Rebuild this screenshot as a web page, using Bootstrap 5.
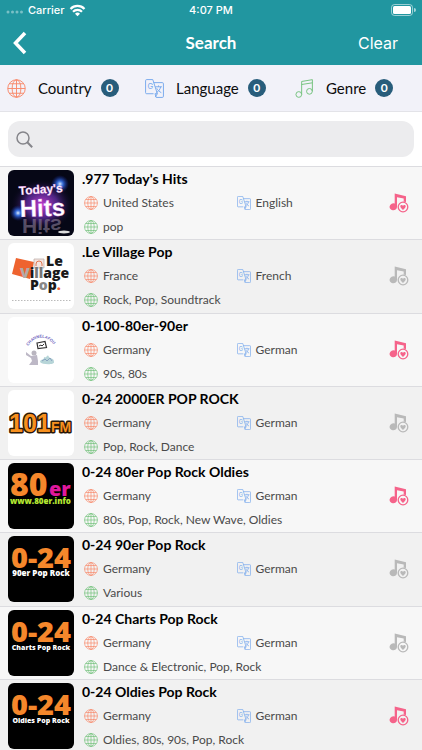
<!DOCTYPE html>
<html lang="en">
<head>
<meta charset="utf-8">
<meta name="viewport" content="width=device-width, initial-scale=1">
<title>Search</title>
<link href="https://cdn.jsdelivr.net/npm/bootstrap@5.3.0/dist/css/bootstrap.min.css" rel="stylesheet">
<style>
html { scrollbar-width: none; }
html::-webkit-scrollbar { display: none; }
body { font-family: Lato, "Liberation Sans", sans-serif; background: #fff; color: #0c0c0c; }
svg { display: block; flex: none; }
.app-head { background: #2196a0; color: #fff; }
.status { height: 20px; font: 500 11px/20px Inter, sans-serif; padding: 0 6px; }
.head-grid { display: grid; grid-template-columns: 1fr auto 1fr; align-items: center; }
.nav-line { height: 45px; padding: 0 24px 0 12px; }
.nav-line h1 { font-size: 17px; line-height: 24px; font-weight: 700; padding-left: 12px; }
.nav-line .btn { color: #fff; font: 400 16px/24px Inter, sans-serif; }
.filters { display: grid; grid-template-columns: 138fr 150fr 134fr; background: #f2f2f9; height: 47px; border-bottom: 1px solid #e3e3e8; }
.filters .btn { padding: 0 0 0 7px; border: 0; gap: 12px; font-size: 15px; line-height: 24px; color: #0c0c0c; }
.count { width: 18px; height: 18px; border-radius: 9px; background: #285d7b; color: #fff; font-size: 12px; line-height: 18px; font-weight: 700; margin-left: -3px; }
.search-box { padding: 9px 8px; }
.search-pill { height: 36px; border-radius: 12px; background: #ececee; padding: 0 8px; gap: 8px; }
.search-pill input { font-size: 16px; }
.stations { display: grid; grid-auto-rows: 1fr; min-height: 587px; border-top: 1px solid #dcdce0; }
.station { padding: 0 13px 0 8px; border-bottom: 1px solid #dcdce0; background: #f7f7f7; }
.station:nth-child(even) { background: #f1f1f1; }
.thumb { border-radius: 6px; }
.info { padding-left: 8px; }
.info h2 { font-size: 14px; line-height: 24px; font-weight: 700; color: #000; }
.meta { font-size: 12px; line-height: 24px; color: #4a4a4a; padding-left: 2px; }
.meta span { gap: 5px; }
.c-orange { color: #f8896c; }
.c-green { color: #72c17b; }
.c-blue { color: #76a8ec; }
.fav { color: #b9b9b9; }
.fav.on { color: #f5638a; }
.logo-today { font-family: "Liberation Sans", sans-serif; font-weight: 700; }
.logo-pop { font-family: "Open Sans", sans-serif; font-weight: 800; }
</style>
<script src="https://cdn.jsdelivr.net/npm/bootstrap@5.3.0/dist/js/bootstrap.bundle.min.js" defer></script>
</head>
<body>
<svg width="0" height="0" class="position-absolute" aria-hidden="true">
  <symbol id="globe" viewBox="0 0 20 20"><g fill="none" stroke="currentColor"><circle cx="10" cy="10" r="9.2"/><ellipse cx="10" cy="10" rx="4.6" ry="9.2"/><path d="M10 .8v18.4M.8 10h18.4M2.4 5h15.2M2.4 15h15.2"/></g></symbol>
  <symbol id="lang" viewBox="0 0 20 20"><g fill="none" stroke="currentColor"><path d="M9 15.500H1.800Q.6 15.500.6 14.300V1.800Q.6.600 1.800.600H8.200L13 15.500M9 3.800H18.200Q19.400 3.800 19.400 5V18.200Q19.400 19.400 18.200 19.400H11.800L10.500 15.500H13L10.800 19"/><path d="M10.800 8.200h7M14.200 6.800v1.400M16.500 8.200c-.6 3-2.300 4.800-4.500 6.200M12.400 9.800c1 2 2.700 3.600 4.800 4.600"/></g><text x="2.600" y="10.800" font-family="Inter, sans-serif" font-size="8" fill="currentColor">G</text></symbol>
  <symbol id="note" viewBox="0 0 20 20"><g fill="none" stroke="currentColor"><circle cx="4" cy="16.300" r="3"/><circle cx="15.200" cy="13" r="3"/><path d="M7 16.300V2.600L18.300.700V13M7 5.800L18.300 4"/></g></symbol>
  <symbol id="fav" viewBox="0 0 20 20"><path fill="currentColor" d="M5.700.600 17 3.200V9.100A6 6 0 0 0 14.700 8.900V5.600L8 4.200V14A3.700 3.500 0 1 1 5.700 10.600Z"/><circle cx="14" cy="14" r="4.800" fill="none" stroke="currentColor" stroke-width="1.300"/><path fill="currentColor" d="M14 16.900C12 15.300 11.300 14.300 11.300 13.300 11.300 11.900 13.100 11.400 14 12.700 14.900 11.400 16.700 11.900 16.700 13.300 16.700 14.300 16 15.300 14 16.900Z"/></symbol>
  <radialGradient id="glow"><stop offset="0" stop-color="#c23bd0"/><stop offset=".5" stop-color="#5a2a96" stop-opacity=".85"/><stop offset="1" stop-color="#060716" stop-opacity="0"/></radialGradient>
  <radialGradient id="spark"><stop offset="0" stop-color="#dff0ff"/><stop offset=".35" stop-color="#3a7cff" stop-opacity=".8"/><stop offset="1" stop-color="#1428a0" stop-opacity="0"/></radialGradient>
</svg>

<header class="app-head">
  <div class="status head-grid">
    <div class="d-flex align-items-center">
      <svg width="18" height="10" fill="#fff" fill-opacity=".4" aria-hidden="true"><circle cx="2" cy="7" r="1.500"/><circle cx="6.500" cy="7" r="1.500"/><circle cx="11" cy="7" r="1.500"/><circle cx="15.500" cy="7" r="1.500"/></svg>
      <span class="ms-1 me-1">Carrier</span>
      <svg width="17" height="13" viewBox="0 0 17 13" aria-hidden="true"><g fill="none" stroke="#fff" stroke-width="2.200"><path d="M1.500 4.900a9.800 9.800 0 0 1 14 0M4 7.700a6.300 6.300 0 0 1 9 0"/></g><path fill="#fff" d="M8.500 12.300 6 9.700a3.500 3.500 0 0 1 5 0Z"/></svg>
    </div>
    <span>4:07 PM</span>
    <svg class="ms-auto" width="25" height="12" viewBox="0 0 25 12" aria-label="Battery full"><rect x=".5" y=".5" width="21" height="11" rx="3" fill="none" stroke="#fff" stroke-opacity=".55"/><rect x="2" y="2" width="18" height="8" rx="1.500" fill="#fff"/><path d="M23 4a2 2 0 0 1 0 4Z" fill="#fff" fill-opacity=".6"/></svg>
  </div>
  <div class="nav-line head-grid">
    <button class="btn p-0 border-0 me-auto" type="button" aria-label="Back"><svg width="16" height="24" viewBox="0 0 16 24" fill="none" stroke="#fff" stroke-width="3.500"><path d="M13 2 3.500 12 13 22"/></svg></button>
    <h1 class="m-0">Search</h1>
    <button class="btn p-0 border-0 ms-auto" type="button">Clear</button>
  </div>
</header>

<nav class="filters" aria-label="Filters">
  <button class="btn d-flex align-items-center" type="button"><svg class="c-orange" width="19" height="19"><use href="#globe"/></svg>Country<span class="count">0</span></button>
  <button class="btn d-flex align-items-center" type="button"><svg class="c-blue" width="19" height="19"><use href="#lang"/></svg>Language<span class="count">0</span></button>
  <button class="btn d-flex align-items-center" type="button"><svg class="c-green" width="19" height="19"><use href="#note"/></svg>Genre<span class="count">0</span></button>
</nav>

<form class="search-box" role="search">
  <label class="search-pill d-flex align-items-center">
    <svg width="17" height="17" viewBox="0 0 17 17" fill="none" stroke="#85858a" stroke-width="1.500"><circle cx="7" cy="7" r="6"/><path d="M11.300 11.300 16.200 16.200" stroke-width="2"/></svg>
    <input class="form-control border-0 bg-transparent shadow-none p-0" type="search" aria-label="Search stations">
  </label>
</form>

<main class="stations">
  <article class="station d-flex align-items-center">
    <svg class="thumb" width="66" height="66" viewBox="0 0 66 66"><rect width="66" height="66" fill="#060716"/><ellipse cx="34" cy="35" rx="32" ry="26" fill="url(#glow)"/><circle cx="52" cy="14" r="9" fill="url(#spark)"/><circle cx="10" cy="43" r="8" fill="url(#spark)"/><g class="logo-today" fill="#fff" stroke="#eda0f0" stroke-width=".3"><text x="11" y="25" font-size="12" transform="rotate(-4 11 25)">Today's</text><text x="12" y="47" font-size="24" transform="rotate(-2 12 47)">Hits</text></g><g class="logo-today" fill="#8b7d96" opacity=".6"><text x="14" y="-49" font-size="21" transform="scale(1 -1)">Hits</text></g><ellipse cx="56" cy="62" rx="6" ry="1.500" fill="#ddd"/></svg>
    <div class="info flex-grow-1">
      <h2 class="m-0">.977 Today's Hits</h2>
      <div class="meta row g-0"><span class="col-6 d-flex align-items-center"><svg class="c-orange" width="14" height="14"><use href="#globe"/></svg>United States</span><span class="col-6 d-flex align-items-center"><svg class="c-blue" width="14" height="14"><use href="#lang"/></svg>English</span></div>
      <div class="meta"><span class="d-flex align-items-center"><svg class="c-green" width="14" height="14"><use href="#globe"/></svg>pop</span></div>
    </div>
    <button class="fav on btn p-0 border-0" type="button" aria-label="Remove favourite"><svg width="20" height="20"><use href="#fav"/></svg></button>
  </article>

  <article class="station d-flex align-items-center">
    <svg class="thumb" width="66" height="66" viewBox="0 0 66 66"><rect width="66" height="66" fill="#fff"/><path fill="#ee632f" d="M8 15 26 19 22 36 4 31Z"/><path d="M26 16h10v9H26Z" fill="#f4e4df" stroke="#b9a9a5" stroke-width=".7"/><path d="M28 23v-2a3 3 0 0 1 6 0v2" fill="none" stroke="#e07852"/><g class="logo-pop" font-size="14" fill="#191919"><text x="38" y="23">Le</text><text x="12" y="35"><tspan fill="#b3aaa7">V</tspan>i<tspan fill="#777">ll</tspan>age</text><text x="22" y="47">P<tspan fill="#888">o</tspan>p<tspan fill="#ee632f">.</tspan></text></g><path d="M4 57.500h59" stroke="#bbb" stroke-width="1" stroke-dasharray="1.500 1.500"/></svg>
    <div class="info flex-grow-1">
      <h2 class="m-0">.Le Village Pop</h2>
      <div class="meta row g-0"><span class="col-6 d-flex align-items-center"><svg class="c-orange" width="14" height="14"><use href="#globe"/></svg>France</span><span class="col-6 d-flex align-items-center"><svg class="c-blue" width="14" height="14"><use href="#lang"/></svg>French</span></div>
      <div class="meta"><span class="d-flex align-items-center"><svg class="c-green" width="14" height="14"><use href="#globe"/></svg>Rock, Pop, Soundtrack</span></div>
    </div>
    <button class="fav btn p-0 border-0" type="button" aria-label="Add favourite"><svg width="20" height="20"><use href="#fav"/></svg></button>
  </article>

  <article class="station d-flex align-items-center">
    <svg class="thumb" width="66" height="66" viewBox="0 0 66 66"><rect width="66" height="66" fill="#fff"/><path id="arch" d="M20 29Q33 12 47 29" fill="none"/><text font-family="Liberation Sans, sans-serif" font-size="4" font-weight="700" fill="#6b62bd"><textPath href="#arch">CHANNELAFOU</textPath></text><path d="M29 26l8-1.500 1.500 6-8.500 1Z" fill="#fff" stroke="#333" stroke-width="1.200"/><path d="M31 29l2-1 1 1 2-2" stroke="#333" fill="none"/><circle cx="26" cy="36" r="2.500" fill="#b9b5bf"/><path d="M18 35l5 4 6-1 1 6v4H21l3-4-1-3-5-3Z" fill="#bdb8c6"/><path d="M32 45c1-4 4-1 4-5 3 2 3-4 5 0 2 2 5 1 5 5 1 3-12 3-14 0Z" fill="#b7d5d8"/><path d="M34 44l3-2 2 2 3-3 2 3" stroke="#8aa3c0" fill="none"/></svg>
    <div class="info flex-grow-1">
      <h2 class="m-0">0-100-80er-90er</h2>
      <div class="meta row g-0"><span class="col-6 d-flex align-items-center"><svg class="c-orange" width="14" height="14"><use href="#globe"/></svg>Germany</span><span class="col-6 d-flex align-items-center"><svg class="c-blue" width="14" height="14"><use href="#lang"/></svg>German</span></div>
      <div class="meta"><span class="d-flex align-items-center"><svg class="c-green" width="14" height="14"><use href="#globe"/></svg>90s, 80s</span></div>
    </div>
    <button class="fav on btn p-0 border-0" type="button" aria-label="Remove favourite"><svg width="20" height="20"><use href="#fav"/></svg></button>
  </article>

  <article class="station d-flex align-items-center">
    <svg class="thumb" width="66" height="66" viewBox="0 0 66 66"><rect width="66" height="66" fill="#fff"/><g class="logo-today" fill="#f7901e" stroke="#2b1808" stroke-width="3" stroke-linejoin="round" paint-order="stroke"><text x="1" y="42" font-size="25">101</text><text x="43" y="42" font-size="14">FM</text></g></svg>
    <div class="info flex-grow-1">
      <h2 class="m-0">0-24 2000ER POP ROCK</h2>
      <div class="meta row g-0"><span class="col-6 d-flex align-items-center"><svg class="c-orange" width="14" height="14"><use href="#globe"/></svg>Germany</span><span class="col-6 d-flex align-items-center"><svg class="c-blue" width="14" height="14"><use href="#lang"/></svg>German</span></div>
      <div class="meta"><span class="d-flex align-items-center"><svg class="c-green" width="14" height="14"><use href="#globe"/></svg>Pop, Rock, Dance</span></div>
    </div>
    <button class="fav btn p-0 border-0" type="button" aria-label="Add favourite"><svg width="20" height="20"><use href="#fav"/></svg></button>
  </article>

  <article class="station d-flex align-items-center">
    <svg class="thumb" width="66" height="66" viewBox="0 0 66 66"><rect width="66" height="66"/><g class="logo-pop"><text x="2" y="33" font-size="32" fill="#f5872b">80</text><text x="41" y="33" font-size="20" fill="#e0189c">er</text><text x="2" y="41" font-size="8" fill="#b4e632">www.80er.info</text></g></svg>
    <div class="info flex-grow-1">
      <h2 class="m-0">0-24 80er Pop Rock Oldies</h2>
      <div class="meta row g-0"><span class="col-6 d-flex align-items-center"><svg class="c-orange" width="14" height="14"><use href="#globe"/></svg>Germany</span><span class="col-6 d-flex align-items-center"><svg class="c-blue" width="14" height="14"><use href="#lang"/></svg>German</span></div>
      <div class="meta"><span class="d-flex align-items-center"><svg class="c-green" width="14" height="14"><use href="#globe"/></svg>80s, Pop, Rock, New Wave, Oldies</span></div>
    </div>
    <button class="fav on btn p-0 border-0" type="button" aria-label="Remove favourite"><svg width="20" height="20"><use href="#fav"/></svg></button>
  </article>

  <article class="station d-flex align-items-center">
    <svg class="thumb" width="66" height="66" viewBox="0 0 66 66"><rect width="66" height="66"/><g class="logo-pop" text-anchor="middle"><text x="33" y="32" font-size="29" fill="#f5872b">0-24</text><text x="33" y="40" font-size="8" fill="#fff">90er Pop Rock</text></g></svg>
    <div class="info flex-grow-1">
      <h2 class="m-0">0-24 90er Pop Rock</h2>
      <div class="meta row g-0"><span class="col-6 d-flex align-items-center"><svg class="c-orange" width="14" height="14"><use href="#globe"/></svg>Germany</span><span class="col-6 d-flex align-items-center"><svg class="c-blue" width="14" height="14"><use href="#lang"/></svg>German</span></div>
      <div class="meta"><span class="d-flex align-items-center"><svg class="c-green" width="14" height="14"><use href="#globe"/></svg>Various</span></div>
    </div>
    <button class="fav btn p-0 border-0" type="button" aria-label="Add favourite"><svg width="20" height="20"><use href="#fav"/></svg></button>
  </article>

  <article class="station d-flex align-items-center">
    <svg class="thumb" width="66" height="66" viewBox="0 0 66 66"><rect width="66" height="66"/><g class="logo-pop" text-anchor="middle"><text x="33" y="32" font-size="29" fill="#f5872b">0-24</text><text x="33" y="40" font-size="7" fill="#fff">Charts Pop Rock</text></g></svg>
    <div class="info flex-grow-1">
      <h2 class="m-0">0-24 Charts Pop Rock</h2>
      <div class="meta row g-0"><span class="col-6 d-flex align-items-center"><svg class="c-orange" width="14" height="14"><use href="#globe"/></svg>Germany</span><span class="col-6 d-flex align-items-center"><svg class="c-blue" width="14" height="14"><use href="#lang"/></svg>German</span></div>
      <div class="meta"><span class="d-flex align-items-center"><svg class="c-green" width="14" height="14"><use href="#globe"/></svg>Dance &amp; Electronic, Pop, Rock</span></div>
    </div>
    <button class="fav btn p-0 border-0" type="button" aria-label="Add favourite"><svg width="20" height="20"><use href="#fav"/></svg></button>
  </article>

  <article class="station d-flex align-items-center">
    <svg class="thumb" width="66" height="66" viewBox="0 0 66 66"><rect width="66" height="66"/><g class="logo-pop" text-anchor="middle"><text x="33" y="32" font-size="29" fill="#f5872b">0-24</text><text x="33" y="40" font-size="7" fill="#fff">Oldies Pop Rock</text></g></svg>
    <div class="info flex-grow-1">
      <h2 class="m-0">0-24 Oldies Pop Rock</h2>
      <div class="meta row g-0"><span class="col-6 d-flex align-items-center"><svg class="c-orange" width="14" height="14"><use href="#globe"/></svg>Germany</span><span class="col-6 d-flex align-items-center"><svg class="c-blue" width="14" height="14"><use href="#lang"/></svg>German</span></div>
      <div class="meta"><span class="d-flex align-items-center"><svg class="c-green" width="14" height="14"><use href="#globe"/></svg>Oldies, 80s, 90s, Pop, Rock</span></div>
    </div>
    <button class="fav on btn p-0 border-0" type="button" aria-label="Remove favourite"><svg width="20" height="20"><use href="#fav"/></svg></button>
  </article>
</main>
</body>
</html>
